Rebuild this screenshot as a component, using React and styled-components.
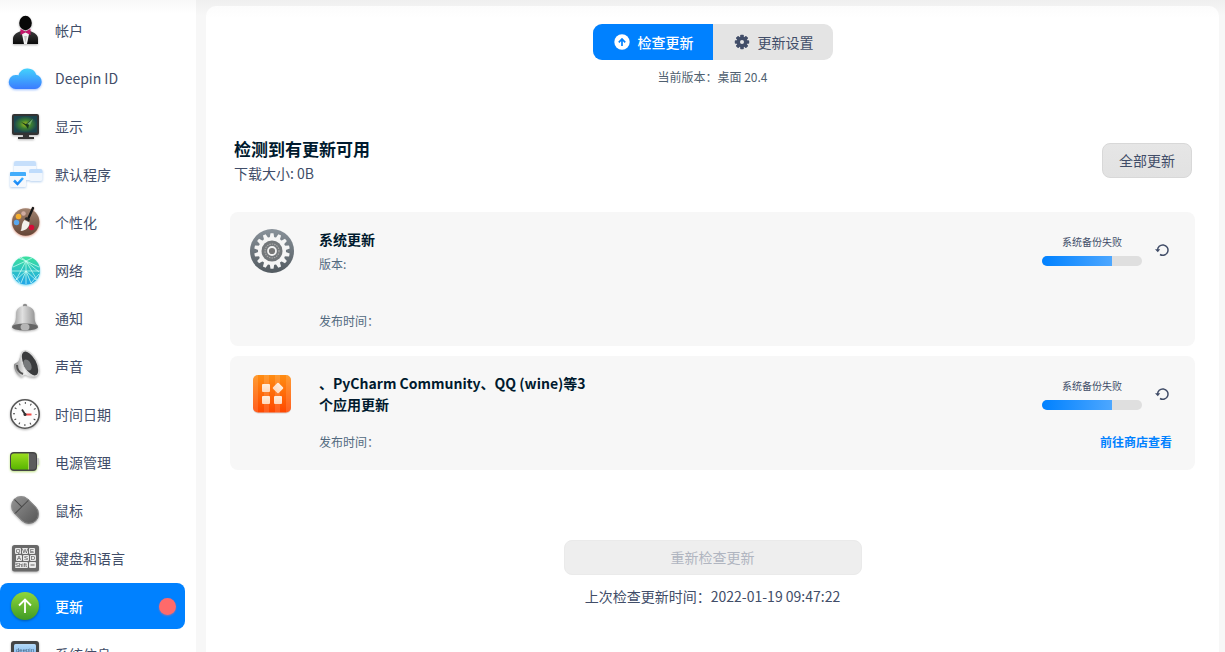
import React, { useState } from 'react';
import styled, { createGlobalStyle, css } from 'styled-components';

const GlobalStyle = createGlobalStyle`
    * {
        box-sizing: border-box;
    }

    body {
        margin: 0;
        font-family: "Noto Sans CJK SC", "Noto Sans", sans-serif;
        font-size: 14px;
        line-height: 21px;
        color: #414d68;
        background: #f7f7f7;
    }

    button {
        font: inherit;
        color: inherit;
        cursor: pointer;
    }

    h1, h2, p, ul {
        margin: 0;
        padding: 0;
    }
`;

const Window = styled.div`
    display: flex;
    gap: 10px;
    height: 100vh;
    overflow: hidden;
    background: linear-gradient(#efefef, #f7f7f7 16px);
`;

const Sidebar = styled.nav`
    flex: none;
    width: 196px;
    padding: 7px 11px 0 0;
    overflow: hidden;
    background: linear-gradient(#f8f8f8, #fff 14px);
`;

const MenuList = styled.ul`
    display: flex;
    flex-direction: column;
    gap: 2px;
    list-style: none;
`;

const MenuButton = styled.button`
    display: flex;
    align-items: center;
    gap: 12px;
    width: 100%;
    height: 46px;
    padding: 0 9px 0 7px;
    border: 0;
    border-radius: 8px;
    background: none;
    line-height: 20px;
    text-align: left;

    ${({ $active }) => $active && css`
        background: #0081ff;
        color: #fff;
        font-weight: 500;
    `}
`;

const MenuIcon = styled.svg`
    flex: none;
    width: 36px;
    height: 36px;
    overflow: visible;
    filter: drop-shadow(0 1px 1px ${({ $shadow }) => $shadow || 'rgba(0, 0, 0, 0.3)'});
`;

const Badge = styled.span`
    width: 17px;
    height: 17px;
    margin-left: auto;
    border-radius: 50%;
    background: #ff6a6a;
    box-shadow: 0 1px 2px rgba(255, 106, 106, 0.5);
`;

const Content = styled.main`
    flex: 1;
    display: flex;
    flex-direction: column;
    margin: 6px 6px 0 0;
    padding: 18px 24px 0;
    border-radius: 10px 10px 0 0;
    background: linear-gradient(#fcfcfc, #fff 12px);
`;

const Tabs = styled.div`
    display: flex;
    align-self: center;
    width: 240px;
    height: 36px;
    border-radius: 9px;
    overflow: hidden;
    background: #e4e4e4;
`;

const Tab = styled.button`
    flex: 1;
    display: flex;
    align-items: center;
    justify-content: center;
    gap: 8px;
    padding: 0 0 0 2px;
    border: 0;
    line-height: 20px;
    background: ${({ $active }) => $active ? '#0081ff' : 'transparent'};
    color: ${({ $active }) => $active ? '#fff' : 'inherit'};
    font-weight: ${({ $active }) => $active ? 500 : 400};
`;

const SmallText = styled.p`
    font-size: 12px;
    line-height: 18px;
    color: #526a7f;
`;

const Version = styled(SmallText)`
    margin-top: 8px;
    text-align: center;
    color: #4f5f70;
`;

const Summary = styled.header`
    display: flex;
    align-items: center;
    justify-content: space-between;
    margin-top: 50px;
    padding: 0 3px 0 4px;
`;

const Title = styled.h1`
    font-size: 17px;
    line-height: 26px;
    font-weight: 700;
    color: #001a2e;
`;

const DownloadSize = styled.p`
    line-height: 22px;
`;

const PushButton = styled.button`
    width: ${({ $wide }) => $wide ? '298px' : '90px'};
    height: 35px;
    padding: 0;
    border: 1px solid #d8d8d8;
    border-radius: 8px;
    background: linear-gradient(#e6e6e6, #e2e2e2);

    &:disabled {
        border-color: #eaeaea;
        background: #eee;
        color: #b0b5c0;
        cursor: default;
    }
`;

const CardList = styled.div`
    display: flex;
    flex-direction: column;
    gap: 10px;
    margin-top: 28px;
`;

const Card = styled.section`
    display: flex;
    min-height: 114px;
    padding: 17px 23px 16px 20px;
    border-radius: 8px;
    background: #f7f7f7;
`;

const CardIcon = styled.svg`
    flex: none;
    width: 44px;
    height: 44px;
    margin-right: 25px;
`;

const CardTitle = styled.h2`
    max-width: 270px;
    font-size: 14px;
    line-height: 21px;
    font-weight: 700;
    color: #001a2e;
`;

const CardVersion = styled(SmallText)`
    margin-top: 5px;
`;

const PublishTime = styled(SmallText)`
    margin-top: ${({ $far }) => $far ? '39px' : '18px'};
`;

const CardSide = styled.div`
    display: flex;
    flex-direction: column;
    justify-content: space-between;
    align-items: flex-end;
    margin-left: auto;
    padding: 5px 0 3px;
`;

const Status = styled.div`
    display: flex;
    align-items: center;
    gap: 13px;
`;

const StatusText = styled.p`
    margin-bottom: 6px;
    font-size: 10px;
    line-height: 16px;
    text-align: center;
`;

const Track = styled.div`
    width: 100px;
    height: 10px;
    border-radius: 5px;
    overflow: hidden;
    background: #dfdfdf;
`;

const Bar = styled.div`
    height: 100%;
    background: linear-gradient(90deg, #0081ff, #4da7ff);
`;

const RetryButton = styled.button`
    display: flex;
    margin-right: 3px;
    padding: 0;
    border: 0;
    background: none;
`;

const StoreLink = styled.a`
    font-size: 12px;
    line-height: 18px;
    font-weight: 700;
    color: #0081ff;
    text-decoration: none;
`;

const Footer = styled.footer`
    display: flex;
    flex-direction: column;
    align-items: center;
    gap: 11px;
    margin-top: 70px;
`;

const Gradient = ({ id, from, to }) => (
    <linearGradient id={id} x1="0" y1="0" x2="0" y2="1">
        <stop offset="0" stopColor={from} />
        <stop offset="1" stopColor={to} />
    </linearGradient>
);

const AccountIcon = () => (
    <MenuIcon viewBox="0 0 36 36">
        <Gradient id="suit" from="#3c3c3c" to="#0b0b0b" />
        <path d="M6 32v-5c0-4 3-6 8-8h9c5 2 8 4 8 8v5z" fill="url(#suit)" />
        <path d="M14.500 19.500h8L20 32h-3z" fill="#f2f2f2" />
        <path d="M17 24h3l-1.500 7z" fill="#c8c8c8" />
        <path d="M18.500 19.500l-5-2.500v6l5-2.500 5 2.500v-6z" fill="#c3166b" />
        <ellipse cx="18.500" cy="11" rx="6.300" ry="7.200" fill="#080808" />
    </MenuIcon>
);

const CloudIcon = () => (
    <MenuIcon viewBox="0 0 36 36" $shadow="rgba(56, 128, 255, 0.5)">
        <Gradient id="cloud" from="#43d3fc" to="#3b7bff" />
        <path d="M9 29a7 7 0 0 1-.5-14c1-.1 2 0 3 .4A9.300 9.300 0 0 1 29.300 14.700 7.300 7.300 0 0 1 28 29z" fill="url(#cloud)" />
    </MenuIcon>
);

const DisplayIcon = () => (
    <MenuIcon viewBox="0 0 36 36">
        <radialGradient id="screen">
            <stop offset="0" stopColor="#a5bf1c" />
            <stop offset="0.500" stopColor="#3b7f32" />
            <stop offset="1" stopColor="#1b454d" />
        </radialGradient>
        <path d="M16 26h6v3h5v2H11v-2h5z" fill="#353535" />
        <rect x="5" y="6" width="27" height="21" rx="2" fill="#333" />
        <rect x="7" y="8" width="23" height="16.500" fill="url(#screen)" />
        <path d="M14 14l5 2 5-4-2 5-1 4-2-3z" fill="#17371c" />
        <path d="M20 16l6-5-3 6z" fill="#72a96d" />
    </MenuIcon>
);

const DefaultAppsIcon = () => (
    <MenuIcon viewBox="0 0 36 36" $shadow="rgba(90, 150, 220, 0.45)">
        <Gradient id="check" from="#3db2ff" to="#1684f6" />
        <rect x="7" y="5" width="22" height="19" rx="2" fill="#f4f9ff" />
        <path d="M7 10V7a2 2 0 0 1 2-2h18a2 2 0 0 1 2 2v3z" fill="#c6dffb" />
        <rect x="22" y="13" width="13.500" height="12" rx="2" fill="#f0f6fd" />
        <path d="M22 17v-2a2 2 0 0 1 2-2h9.500a2 2 0 0 1 2 2v2z" fill="#bfdcfc" />
        <rect x="3" y="16" width="16" height="15" rx="1" fill="#f5f8fc" />
        <path d="M3 20v-3a1 1 0 0 1 1-1h14a1 1 0 0 1 1 1v3z" fill="#43adfb" />
        <path d="M7 24.500l3.500 3.500 5.500-6" fill="none" stroke="url(#check)" strokeWidth="2.500" />
    </MenuIcon>
);

const PaletteIcon = () => (
    <MenuIcon viewBox="0 0 36 36" $shadow="rgba(190, 60, 20, 0.5)">
        <Gradient id="wood" from="#a18370" to="#664637" />
        <circle cx="18.700" cy="18" r="13.700" fill="url(#wood)" />
        <circle cx="16.500" cy="9.500" r="2.300" fill="#d0aca0" />
        <circle cx="11.500" cy="12.500" r="2.800" fill="#f5ad2c" />
        <circle cx="9.500" cy="18.500" r="2.700" fill="#59a6ed" />
        <circle cx="24.500" cy="23.500" r="2.800" fill="#d50c36" />
        <path d="M26 4l-4.500 10" stroke="#181818" strokeWidth="2.400" strokeLinecap="round" />
        <path d="M17.500 16l5 2.500c0 4-2.500 8-9 8.500 2-2 0-7 4-11z" fill="#f3f0eb" />
        <path d="M19 13l4 2.200-1 2.300-4.500-2.500z" fill="#292929" />
    </MenuIcon>
);

const NetworkIcon = () => (
    <MenuIcon viewBox="0 0 36 36" $shadow="rgba(20, 190, 230, 0.6)">
        <Gradient id="globe" from="#3ce29d" to="#1fa5ea" />
        <circle cx="19" cy="18.500" r="14" fill="url(#globe)" />
        <g fill="none" stroke="#d5fff6" strokeWidth="0.700">
            <path d="M5 19h28M19 9v23M19 9L9 28M19 9l11 19M19 9L6 15M19 9l13 6M14 5l18 15M19 19l10 9M19 19L9 28M19 19l5 12M19 19l-5 12M12 6l7 3M25 6l-6 3M6 22l7 9M32 22l-8 9" />
        </g>
    </MenuIcon>
);

const BellIcon = () => (
    <MenuIcon viewBox="0 0 36 36">
        <linearGradient id="bell">
            <stop offset="0" stopColor="#939393" />
            <stop offset="0.400" stopColor="#e0e0e0" />
            <stop offset="1" stopColor="#858585" />
        </linearGradient>
        <circle cx="18" cy="6" r="2.200" fill="#8e8e8e" />
        <path d="M18 6c-6 0-9 3-9 8 0 6-.5 9-4 12h26c-3-3-3.500-6-3.500-12 0-5-4-8-9.500-8z" fill="url(#bell)" />
        <ellipse cx="18" cy="27" rx="13" ry="3.500" fill="#656565" />
        <ellipse cx="18" cy="27" rx="4.500" ry="3.500" fill="#b5b5b5" />
    </MenuIcon>
);

const SoundIcon = () => (
    <MenuIcon viewBox="0 0 36 36">
        <linearGradient id="horn">
            <stop offset="0" stopColor="#8c8c8c" />
            <stop offset="0.500" stopColor="#f1f1f1" />
            <stop offset="1" stopColor="#b5b5b5" />
        </linearGradient>
        <path d="M7 17c0-2 4-2 5-5l3-9 14 26c-5 1-8-1-10-2-3-1-3 3-5 2-4-2-7-7-7-12z" fill="url(#horn)" />
        <path d="M10 17c0 5 3 8 6 9" fill="none" stroke="#515151" strokeWidth="2" />
        <ellipse cx="23" cy="15.500" rx="6.800" ry="13.800" transform="rotate(-28 23 15.500)" fill="#3a3b3d" stroke="#d9d9d9" strokeWidth="1.300" />
        <ellipse cx="20.500" cy="17" rx="3.500" ry="6" transform="rotate(-28 20.500 17)" fill="#77797b" />
    </MenuIcon>
);

const ClockIcon = () => (
    <MenuIcon viewBox="0 0 36 36">
        <circle cx="18" cy="18" r="14.200" fill="#fdfdfd" stroke="#555" strokeWidth="1.600" />
        <circle cx="18" cy="18" r="11" fill="none" stroke="#444" strokeWidth="2" strokeDasharray="1 4.760" strokeDashoffset="0.500" />
        <path d="M18 18.500h6.500" stroke="#f14a4a" strokeWidth="2" />
        <path d="M18.500 19L15 13.500" stroke="#333" strokeWidth="1.800" />
        <circle cx="18" cy="18.500" r="1.500" fill="#333" />
    </MenuIcon>
);

const BatteryIcon = () => (
    <MenuIcon viewBox="0 0 36 36" $shadow="rgba(120, 190, 0, 0.5)">
        <Gradient id="charge" from="#9bdd1e" to="#58b500" />
        <path d="M29 14h2a1 1 0 0 1 1 1v5a1 1 0 0 1-1 1h-2z" fill="#c9c9c9" />
        <rect x="3" y="8" width="27" height="19" rx="4" fill="#444" />
        <path d="M21 9.500h5a3 3 0 0 1 3 3v10a3 3 0 0 1-3 3h-5z" fill="#5c5c5c" />
        <path d="M7 9.500h14v16H7a3 3 0 0 1-3-3v-10a3 3 0 0 1 3-3z" fill="url(#charge)" />
        <path d="M21.500 9.500v16" stroke="#bdf25b" strokeWidth="0.800" />
    </MenuIcon>
);

const MouseIcon = () => (
    <MenuIcon viewBox="0 0 36 36">
        <Gradient id="mouse" from="#8e8e8e" to="#5b5b5b" />
        <g transform="rotate(-45 18 18)">
            <rect x="8" y="2.500" width="20" height="31" rx="10" fill="url(#mouse)" />
            <path d="M8 13.500h20M18 2.500v11" stroke="#484848" strokeWidth="1" />
            <rect x="8.500" y="3" width="19" height="30" rx="9.500" fill="none" stroke="#969696" strokeWidth="0.600" />
        </g>
    </MenuIcon>
);

const KeyboardIcon = () => (
    <MenuIcon viewBox="0 0 36 36">
        <rect x="5" y="5" width="27" height="26.500" rx="2.500" fill="#696969" />
        <g fill="#e9e9e9">
            <rect x="8" y="8" width="6" height="6" rx="1" />
            <rect x="15" y="8" width="6" height="6" rx="1" />
            <rect x="22" y="8" width="6" height="6" rx="1" />
            <rect x="9" y="15" width="6" height="6" rx="1" />
            <rect x="16" y="15" width="6" height="6" rx="1" />
            <rect x="23" y="15" width="6" height="6" rx="1" />
            <rect x="8" y="22" width="13" height="6" rx="1" />
            <rect x="22" y="22" width="7" height="6" rx="1" />
        </g>
        <g fill="#444" fontSize="6" textAnchor="middle" fontFamily="Liberation Sans, sans-serif">
            <text x="11" y="13">Q</text>
            <text x="18" y="13">W</text>
            <text x="25" y="13">E</text>
            <text x="12" y="20">A</text>
            <text x="19" y="20">S</text>
            <text x="26" y="20">D</text>
            <text x="14" y="27">Shift</text>
        </g>
        <path d="M23.500 25h4" stroke="#444" strokeWidth="0.800" />
    </MenuIcon>
);

const UpdateIcon = () => (
    <MenuIcon viewBox="0 0 36 36">
        <Gradient id="update" from="#8fd63c" to="#3f9b24" />
        <circle cx="18" cy="18" r="14" fill="url(#update)" />
        <path d="M18 25V12M12 17.500l6-6 6 6" fill="none" stroke="#fff" strokeWidth="1.800" />
    </MenuIcon>
);

const SystemIcon = () => (
    <MenuIcon viewBox="0 0 36 36">
        <Gradient id="system" from="#b5d9f7" to="#64a8ea" />
        <rect x="4" y="5" width="28" height="26" rx="3" fill="#454545" />
        <rect x="7" y="8" width="22" height="18" rx="1.500" fill="url(#system)" />
        <text x="18" y="16" fill="#45617f" fontSize="6" textAnchor="middle" fontFamily="Liberation Sans, sans-serif">deepin</text>
    </MenuIcon>
);

const GEAR_TEETH = Array.from({ length: 14 }, (_, i) => i * 360 / 14);

const SystemUpdateIcon = () => (
    <CardIcon viewBox="0 0 44 44">
        <Gradient id="gearBack" from="#89929a" to="#535b61" />
        <circle cx="22" cy="22" r="22" fill="url(#gearBack)" />
        <circle cx="22" cy="22" r="14" fill="#f5f5f5" />
        {GEAR_TEETH.map((angle) => (
            <path key={angle} d="M19.700 9l.8-4.800h3l.8 4.800z" fill="#f5f5f5" transform={`rotate(${angle} 22 22)`} />
        ))}
        <circle cx="22" cy="22" r="10.500" fill="#73777a" />
        <circle cx="22" cy="22" r="7" fill="none" stroke="#aaa" strokeWidth="1.200" strokeDasharray="1.500 1" />
        <circle cx="22" cy="22" r="4" fill="#777" stroke="#f2f2f2" strokeWidth="1.800" />
    </CardIcon>
);

const StoreUpdateIcon = () => (
    <CardIcon viewBox="0 0 44 44">
        <Gradient id="store" from="#ff8d12" to="#ff4700" />
        <Gradient id="tile" from="#ffeedd" to="#ffd9bd" />
        <rect x="3" y="3" width="38" height="37.500" rx="5" fill="#d9d4d2" />
        <rect x="3" y="2" width="38" height="37.500" rx="5" fill="url(#store)" />
        <path d="M3 7a5 5 0 0 1 5-5v37.500a5 5 0 0 1-5-5zM14 2h5v37.500h-5zM25 2h5v37.500h-5zM36 2a5 5 0 0 1 5 5v27.500a5 5 0 0 1-5 5z" fill="#fff" fillOpacity="0.130" />
        <g fill="url(#tile)">
            <rect x="12" y="11" width="8" height="8" rx="1" />
            <rect x="12" y="23" width="8" height="8" rx="1" />
            <rect x="24" y="23" width="8" height="8" rx="1" />
            <rect x="24" y="11" width="8" height="8" rx="1" transform="rotate(45 28 15)" />
        </g>
    </CardIcon>
);

const CheckTabIcon = () => (
    <svg width="16" height="16" viewBox="0 0 16 16">
        <circle cx="8" cy="8" r="7.700" fill="#fff" />
        <path d="M8 12V5.500M4.800 8.300L8 5l3.200 3.300" fill="none" stroke="#0081ff" strokeWidth="1.700" />
    </svg>
);

const SettingsTabIcon = () => (
    <svg width="16" height="16" viewBox="0 0 16 16">
        <g fill="#414d68">
            {[0, 45, 90, 135].map((angle) => (
                <rect key={angle} x="6.200" y="0.800" width="3.600" height="14.400" rx="0.800" transform={`rotate(${angle} 8 8)`} />
            ))}
            <circle cx="8" cy="8" r="5.400" />
        </g>
        <circle cx="8" cy="8" r="2" fill="#e4e4e4" />
    </svg>
);

const RetryIcon = () => (
    <svg width="14" height="14" viewBox="0 0 14 14">
        <path d="M2.600 7.500A5.200 5.200 0 1 1 5 11.500" fill="none" stroke="#414d68" strokeWidth="1.500" />
        <path d="M0 6.300h5.200L2.800 9.200z" fill="#414d68" />
    </svg>
);

const MENU = [
    { id: 'account', name: '帐户', Icon: AccountIcon },
    { id: 'cloud', name: 'Deepin ID', Icon: CloudIcon },
    { id: 'display', name: '显示', Icon: DisplayIcon },
    { id: 'defapp', name: '默认程序', Icon: DefaultAppsIcon },
    { id: 'personalization', name: '个性化', Icon: PaletteIcon },
    { id: 'network', name: '网络', Icon: NetworkIcon },
    { id: 'notification', name: '通知', Icon: BellIcon },
    { id: 'sound', name: '声音', Icon: SoundIcon },
    { id: 'datetime', name: '时间日期', Icon: ClockIcon },
    { id: 'power', name: '电源管理', Icon: BatteryIcon },
    { id: 'mouse', name: '鼠标', Icon: MouseIcon },
    { id: 'keyboard', name: '键盘和语言', Icon: KeyboardIcon },
    { id: 'update', name: '更新', Icon: UpdateIcon, badge: true },
    { id: 'systeminfo', name: '系统信息', Icon: SystemIcon },
];

const UpdateStatus = ({ text, value }) => (
    <Status>
        <div>
            <StatusText>{text}</StatusText>
            <Track role="progressbar" aria-label={text} aria-valuenow={value}>
                <Bar style={{ width: `${value}%` }} />
            </Track>
        </div>
        <RetryButton type="button" aria-label="重试">
            <RetryIcon />
        </RetryButton>
    </Status>
);

const App = () => {
    const [current, setCurrent] = useState('update');
    const [tab, setTab] = useState('check');

    return (
        <Window>
            <GlobalStyle />
            <Sidebar>
                <MenuList>
                    {MENU.map(({ id, name, Icon, badge }) => (
                        <li key={id}>
                            <MenuButton type="button" $active={id === current} onClick={() => setCurrent(id)}>
                                <Icon />
                                {name}
                                {badge && <Badge />}
                            </MenuButton>
                        </li>
                    ))}
                </MenuList>
            </Sidebar>

            <Content>
                <Tabs>
                    <Tab type="button" $active={tab === 'check'} onClick={() => setTab('check')}>
                        <CheckTabIcon />
                        检查更新
                    </Tab>
                    <Tab type="button" $active={tab === 'settings'} onClick={() => setTab('settings')}>
                        <SettingsTabIcon />
                        更新设置
                    </Tab>
                </Tabs>
                <Version>当前版本：桌面 20.4</Version>

                <Summary>
                    <div>
                        <Title>检测到有更新可用</Title>
                        <DownloadSize>下载大小: 0B</DownloadSize>
                    </div>
                    <PushButton type="button">全部更新</PushButton>
                </Summary>

                <CardList>
                    <Card>
                        <SystemUpdateIcon />
                        <div>
                            <CardTitle>系统更新</CardTitle>
                            <CardVersion>版本:</CardVersion>
                            <PublishTime $far>发布时间：</PublishTime>
                        </div>
                        <CardSide>
                            <UpdateStatus text="系统备份失败" value={70} />
                        </CardSide>
                    </Card>
                    <Card>
                        <StoreUpdateIcon />
                        <div>
                            <CardTitle>、PyCharm Community、QQ (wine)等3个应用更新</CardTitle>
                            <PublishTime>发布时间：</PublishTime>
                        </div>
                        <CardSide>
                            <UpdateStatus text="系统备份失败" value={70} />
                            <StoreLink href="#store">前往商店查看</StoreLink>
                        </CardSide>
                    </Card>
                </CardList>

                <Footer>
                    <PushButton type="button" $wide disabled>重新检查更新</PushButton>
                    <p>上次检查更新时间：2022-01-19 09:47:22</p>
                </Footer>
            </Content>
        </Window>
    );
};

export default App;
